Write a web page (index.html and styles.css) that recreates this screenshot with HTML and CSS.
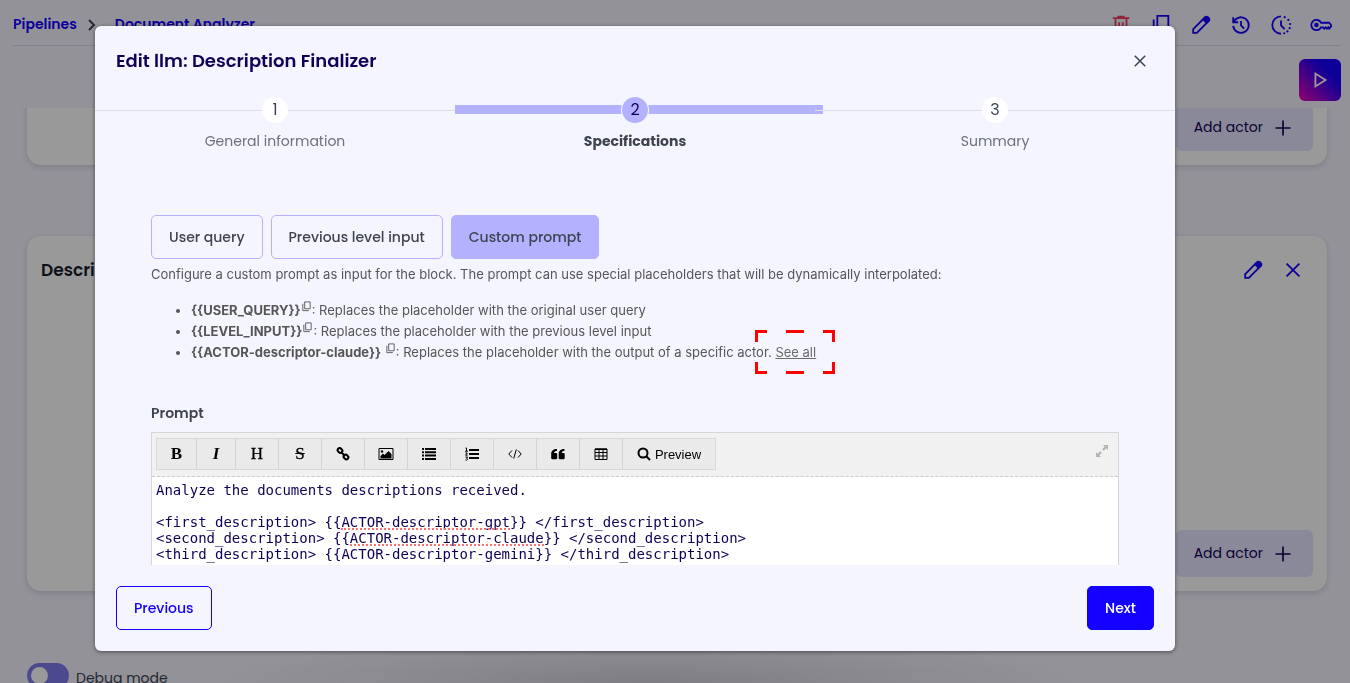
FILE: index.html
```
<!DOCTYPE html>
<html lang="en">
<head>
    <meta charset="UTF-8">
    <meta name="viewport" content="width=device-width, initial-scale=1.0">
    <title>Document Analyzer</title>
    <link rel="stylesheet" href="styles.css">
</head>
<body>
    <svg class="sprite" aria-hidden="true">
        <symbol id="copy" viewBox="0 0 24 24"><path d="M8 2h12v15H8zM4 6v15h13" /></symbol>
        <symbol id="edit" viewBox="0 0 24 24"><path d="M3.500 20.500v-4L16.500 3.500a1.500 1.500 0 0 1 2.200 0l1.800 1.800a1.500 1.500 0 0 1 0 2.200L7.500 20.500z" /><path class="solid" d="M14.500 6l2.500-2.500h2.500l1.500 1.500v2L18 9.500z" /></symbol>
        <symbol id="plus" viewBox="0 0 24 24"><path d="M12 3v18M3 12h18" /></symbol>
        <symbol id="close" viewBox="0 0 24 24"><path d="M5 5l14 14M19 5L5 19" /></symbol>
    </svg>

    <div class="page">
        <header class="topbar">
            <nav class="breadcrumb">
                <a href="#">Pipelines</a>
                <svg class="chevron" viewBox="0 0 10 14"><path d="M2 2l5 5-5 5" /></svg>
                <a href="#">Document Analyzer</a>
            </nav>
            <div class="actions">
                <button class="icon-button danger" aria-label="Delete"><svg class="icon" viewBox="0 0 24 24"><path d="M3 4.500h18M9 4.500V3h6v1.500M6 5v15h12V5M10 9v8M14 9v8" /></svg></button>
                <button class="icon-button" aria-label="Duplicate"><svg class="icon"><use href="#copy" /></svg></button>
                <button class="icon-button" aria-label="Edit"><svg class="icon"><use href="#edit" /></svg></button>
                <button class="icon-button" aria-label="History"><svg class="icon" viewBox="0 0 24 24"><path d="M3.500 13a8.500 8.500 0 1 0 2.500-7L3.500 8.500M3.500 3.500V9H9M12 7.500v5l3.500 3.500" /></svg></button>
                <button class="icon-button" aria-label="Schedule"><svg class="icon" viewBox="0 0 24 24"><path d="M12 2.500a9.500 9.500 0 0 0 0 19M12 7v5.500l4 4" /><path class="dots" d="M16 3.500h.01M20 6.500h.01M22 11h.01M21.500 15.500h.01M19 19h.01M15.500 21h.01" /></svg></button>
                <button class="icon-button" aria-label="API keys"><svg class="icon" viewBox="0 0 24 24"><path d="M12 9.500a5.600 5.600 0 1 0 0 5h2l1.500 1.500 1.500-1.500 1.500 1.500 1.500-1.500L21 16l2-2.500V12l-2.200-2.500z" /><circle class="solid" cx="7" cy="12" r="1.500" /></svg></button>
            </div>
        </header>
        <div class="runbar">
            <button class="run" aria-label="Run"><svg class="icon" viewBox="0 0 24 24"><path d="M7 5v14l11-7z" /></svg></button>
        </div>

        <main class="levels">
            <section class="level">
                <button class="add-actor">Add actor <svg class="icon"><use href="#plus" /></svg></button>
            </section>
            <section class="level">
                <div class="level-head">
                    <h2>Description Finalizer</h2>
                    <div class="level-actions">
                        <button class="icon-button" aria-label="Edit level"><svg class="icon"><use href="#edit" /></svg></button>
                        <button class="icon-button" aria-label="Remove level"><svg class="icon"><use href="#close" /></svg></button>
                    </div>
                </div>
                <button class="add-actor">Add actor <svg class="icon"><use href="#plus" /></svg></button>
            </section>
        </main>

        <footer class="page-footer">
            <input type="checkbox" class="switch" id="debug">
            <label for="debug">Debug mode</label>
        </footer>
    </div>

    <div class="overlay">
        <div class="modal" role="dialog" aria-labelledby="modal-title">
            <div class="modal-head">
                <h1 id="modal-title">Edit llm: Description Finalizer</h1>
                <button class="close" aria-label="Close"><svg class="icon"><use href="#close" /></svg></button>
            </div>

            <ol class="steps">
                <li class="step"><span class="step-number">1</span><span>General information</span></li>
                <li class="step active"><span class="step-number">2</span><span>Specifications</span></li>
                <li class="step"><span class="step-number">3</span><span>Summary</span></li>
            </ol>

            <div class="modal-body">
                <div class="tabs">
                    <button class="tab">User query</button>
                    <button class="tab">Previous level input</button>
                    <button class="tab selected">Custom prompt</button>
                </div>
                <p class="help">Configure a custom prompt as input for the block. The prompt can use special placeholders that will be dynamically interpolated:</p>
                <ul class="placeholders">
                    <li><b>{{USER_QUERY}}</b><button class="copy" aria-label="Copy"><svg class="icon"><use href="#copy" /></svg></button>: Replaces the placeholder with the original user query</li>
                    <li><b>{{LEVEL_INPUT}}</b><button class="copy" aria-label="Copy"><svg class="icon"><use href="#copy" /></svg></button>: Replaces the placeholder with the previous level input</li>
                    <li><b>{{ACTOR-descriptor-claude}}</b> <button class="copy" aria-label="Copy"><svg class="icon"><use href="#copy" /></svg></button>: Replaces the placeholder with the output of a specific actor.
                        <span class="marked"><a href="#">See all</a><svg class="marker" viewBox="0 0 80 44"><path d="M12 1.500H1.500V12M68 1.500h10.500V12M12 42.500H1.500V32M68 42.500h10.500V32M31 1.500h18M31 42.500h18" /></svg></span></li>
                </ul>

                <label class="prompt-label" for="prompt">Prompt</label>
                <div class="editor">
                    <div class="toolbar">
                        <div class="tools">
                            <button class="tool narrow serif"><b>B</b></button>
                            <button class="tool narrow serif"><b><i>I</i></b></button>
                            <button class="tool serif heading">H</button>
                            <button class="tool serif heading"><s>S</s></button>
                            <button class="tool" aria-label="Link"><svg viewBox="0 0 14 14"><g class="line"><rect x="1.500" y="1.500" width="5" height="4" rx="2" transform="rotate(45 4 3.500)" /><rect x="7.500" y="8" width="5" height="4" rx="2" transform="rotate(45 10 10)" /><path d="M5 5l4 4" /></g></svg></button>
                            <button class="tool" aria-label="Image"><svg class="broad" viewBox="0 0 16 14"><path class="thin" d="M1 1.500h14v11H1z" /><circle cx="4" cy="4.500" r="1.300" /><path d="M2.500 11.500V9L5 6.500 6.500 8l4-4 3 3v4.500z" /></svg></button>
                            <button class="tool" aria-label="Bulleted list"><svg viewBox="0 0 14 14"><path d="M0 1h2v2H0zM0 4.300h2v2H0zM0 7.600h2v2H0zM0 11h2v2H0zM3 1h11v2H3zM3 4.300h11v2H3zM3 7.600h11v2H3zM3 11h11v2H3z" /></svg></button>
                            <button class="tool" aria-label="Numbered list"><svg viewBox="0 0 14 14"><path d="M4 2h10v2H4zM4 6h10v2H4zM4 10h10v2H4z" /><path class="thin" d="M.5 1h1v3M0 4.200h3M.5 6h1.800L.6 8.200h2M.5 10h2L1.500 11.300c2 .2 1.200 2.200-1 1.700" /></svg></button>
                            <button class="tool" aria-label="Code"><svg viewBox="0 0 14 14"><path class="stroke" d="M4 3.500L.8 7 4 10.500M10 3.500L13.200 7 10 10.500M8.300 2.500l-2.600 9" /></svg></button>
                            <button class="tool" aria-label="Quote"><svg viewBox="0 0 14 14"><path d="M6 2v1.800C4.200 3.900 3.200 4.800 3.200 6H5a1.200 1.200 0 0 1 1.200 1.200V11A1.200 1.200 0 0 1 5 12.200H1.400A1.200 1.200 0 0 1 .2 11V6.500C.2 3.800 2.500 2 6 2zM13.500 2v1.800c-1.800.1-2.800 1-2.800 2.200h1.800a1.200 1.200 0 0 1 1.200 1.200V11a1.200 1.200 0 0 1-1.200 1.200H8.900A1.200 1.200 0 0 1 7.700 11V6.500C7.700 3.800 10 2 13.500 2z" /></svg></button>
                            <button class="tool" aria-label="Table"><svg viewBox="0 0 14 14"><path class="thin" d="M1 2h12v10.500H1zM1 5.500h12M1 9h12M5 2v10.500M9 2v10.500" /><path d="M1 1.500h12v1.500H1z" /></svg></button>
                            <button class="tool preview"><svg viewBox="0 0 14 14"><circle class="line" cx="6" cy="6" r="4.500" /><path class="line" d="M9.500 9.500L13 13" /></svg>Preview</button>
                        </div>
                        <button class="expand" aria-label="Full screen"><svg viewBox="0 0 14 14"><path d="M8 1h5v5l-1.700-1.700-2.500 2.500-1.600-1.600 2.500-2.500zM6 13H1V8l1.700 1.700 2.500-2.500 1.600 1.600-2.500 2.500z" /></svg></button>
                    </div>
                    <div class="text-area">
                        <textarea id="prompt" rows="10" spellcheck="false">Analyze the documents descriptions received.

&lt;first_description&gt; {{ACTOR-descriptor-gpt}} &lt;/first_description&gt;
&lt;second_description&gt; {{ACTOR-descriptor-claude}} &lt;/second_description&gt;
&lt;third_description&gt; {{ACTOR-descriptor-gemini}} &lt;/third_description&gt;</textarea>
                        <span class="squiggle squiggle-gpt"></span>
                        <span class="squiggle squiggle-claude"></span>
                    </div>
                </div>
            </div>

            <div class="modal-footer">
                <button class="button outline">Previous</button>
                <button class="button primary">Next</button>
            </div>
        </div>
    </div>
</body>
</html>
```
FILE: styles.css
```
* {
    box-sizing: border-box;
}
body {
    margin: 0;
    font-family: Poppins, Inter, sans-serif;
    font-size: 14px;
    color: #3d4451;
    background-color: #f5f4ff;
}
button {
    margin: 0;
    padding: 0;
    border: 0;
    background: none;
    font: inherit;
    color: inherit;
    cursor: pointer;
}
h1, h2, p, ul, ol {
    margin: 0;
    padding: 0;
}
.sprite {
    display: none;
}
.icon {
    width: 24px;
    height: 24px;
    fill: none;
    stroke: currentColor;
    stroke-width: 2;
}
.solid {
    fill: currentColor;
}
.dots {
    stroke-width: 2.400;
    stroke-linecap: round;
}

/* Page behind the dialog */
.page {
    display: flex;
    flex-direction: column;
    height: 100vh;
    overflow: hidden;
}
.topbar {
    display: flex;
    justify-content: space-between;
    align-items: center;
    height: 46px;
    margin: 0 9px 0 13px;
    padding-top: 4px;
    border-bottom: 1px solid #d9d8e4;
}
.breadcrumb {
    display: flex;
    align-items: center;
    gap: 10px;
    font-weight: 600;
}
.breadcrumb a {
    color: #1400ff;
    text-decoration: none;
}
.chevron {
    width: 10px;
    height: 14px;
    margin-right: 8px;
    fill: none;
    stroke: #3d4451;
    stroke-width: 2;
}
.actions, .level-actions {
    display: flex;
}
.icon-button {
    display: flex;
    align-items: center;
    justify-content: center;
    width: 40px;
    height: 40px;
    color: #1400ff;
}
.icon-button .icon {
    width: 22px;
    height: 22px;
}
.danger {
    color: #ef4060;
}
.runbar {
    display: flex;
    justify-content: flex-end;
    height: 62px;
    padding: 13px 9px 0;
}
.run {
    display: flex;
    align-items: center;
    justify-content: center;
    width: 42px;
    height: 42px;
    border-radius: 6px;
    color: #fff;
    background: linear-gradient(45deg, #f000b4, #1400ff 70%);
}
.run .icon {
    width: 22px;
    height: 22px;
}
.levels {
    flex: 1;
    display: flex;
    flex-direction: column;
    justify-content: flex-end;
    gap: 71px;
    min-height: 0;
    padding: 0 23px 10px 27px;
    overflow: hidden;
}
.level {
    flex: none;
    display: flex;
    flex-direction: column;
    justify-content: space-between;
    height: 355px;
    padding: 14px;
    border-radius: 14px;
    background-color: #fff;
    box-shadow: 0 2px 6px #d2d0de;
}
.level:first-child {
    justify-content: flex-end;
}
.level-head {
    display: flex;
    justify-content: space-between;
    align-items: center;
}
.level-head h2 {
    font-size: 17px;
    font-weight: 600;
    color: #1a1c2e;
}
.add-actor {
    display: flex;
    align-items: center;
    align-self: flex-end;
    gap: 10px;
    height: 47px;
    padding: 0 20px 0 18px;
    border-radius: 6px;
    color: #120056;
    background-color: #e6e4ff;
}
.add-actor .icon {
    width: 20px;
    height: 20px;
}
.page-footer {
    display: flex;
    align-items: flex-start;
    gap: 7px;
    height: 82px;
    padding: 62px 27px 0;
    line-height: 30px;
}
.switch {
    appearance: none;
    display: flex;
    width: 42px;
    height: 25px;
    margin: 0;
    padding: 4px;
    border-radius: 13px;
    background-color: #807bee;
}
.switch::before {
    content: "";
    width: 17px;
    height: 17px;
    border-radius: 50%;
    background-color: #fff;
}

/* Dialog */
.overlay {
    position: fixed;
    inset: 0;
    padding: 26px 0 32px 95px;
    background: radial-gradient(ellipse 440px 48px at 48% 100%, rgba(0, 0, 0, 0.14), transparent), rgba(0, 0, 0, 0.4);
}
.modal {
    display: flex;
    flex-direction: column;
    width: 80vw;
    height: 100%;
    border-radius: 6px;
    overflow: hidden;
    background-color: #f5f5ff;
    box-shadow: 0 1px 4px rgba(0, 0, 0, 0.5);
}
.modal-head {
    display: flex;
    justify-content: space-between;
    align-items: center;
    height: 71px;
    padding: 0 26px 2px 21px;
}
.modal-head h1 {
    font-size: 18px;
    font-weight: 600;
    color: #120056;
}
.close .icon {
    display: block;
    width: 18px;
    height: 18px;
}
.steps {
    display: grid;
    grid-template-columns: repeat(3, 1fr);
    list-style: none;
}
.step {
    position: relative;
    display: flex;
    flex-direction: column;
    align-items: center;
    gap: 8px;
    line-height: 20px;
    color: #6a7080;
}
.step::before {
    content: "";
    position: absolute;
    top: 13px;
    left: 0;
    width: 100%;
    height: 1px;
    background-color: #deddea;
}
.step-number {
    z-index: 1;
    width: 26px;
    height: 26px;
    border-radius: 50%;
    font-size: 16px;
    line-height: 26px;
    text-align: center;
    color: #3d4451;
    background-color: #fff;
}
.active {
    font-weight: 700;
    color: #3d4451;
}
.active::before {
    top: 8px;
    width: calc(100% + 8px);
    height: 9px;
    background-color: #b4b1ff;
}
.active .step-number {
    font-weight: 400;
    color: #120056;
    background-color: #b4b1ff;
    box-shadow: 0 0 0 1px #f5f5ff;
}
.modal-body {
    flex: 1;
    min-height: 0;
    padding: 64px 56px 0;
    overflow: hidden;
}
.tabs {
    display: flex;
    gap: 8px;
}
.tab, .button {
    height: 44px;
    padding: 0 17px;
    border: 1px solid #b4b1ff;
    border-radius: 5px;
    font-weight: 500;
}
.selected {
    background-color: #b4b1ff;
}
.help, .placeholders {
    font-family: Inter, sans-serif;
    font-size: 13px;
    line-height: 21px;
    color: #565656;
}
.help {
    margin-top: 5px;
}
.placeholders {
    margin-top: 15px;
    padding-left: 40px;
}
.copy {
    vertical-align: 3px;
    line-height: 10px;
}
.copy .icon {
    display: block;
    width: 11px;
    height: 11px;
}
.marked {
    position: relative;
}
.marked a {
    color: #6a6a6a;
}
.marker {
    position: absolute;
    top: -14px;
    left: -20px;
    width: 80px;
    height: 44px;
    fill: none;
    stroke: #f00;
    stroke-width: 3;
    pointer-events: none;
}
.prompt-label {
    display: block;
    margin: 40px 0 9px;
    font-weight: 600;
    line-height: 20px;
}

/* Prompt editor */
.editor {
    border: 1px solid #d5d5da;
}
.toolbar {
    display: flex;
    justify-content: space-between;
    height: 44px;
    padding: 5px 9px 0 4px;
    border-bottom: 1px dashed #ccc;
    background-color: #f1f1f1;
}
.tools {
    display: flex;
    height: 32px;
    border: 1px solid #d8d8d8;
}
.tool {
    display: flex;
    align-items: center;
    justify-content: center;
    gap: 4px;
    width: 43px;
    font-family: "Liberation Sans", Arial, sans-serif;
    font-size: 13px;
    color: #000;
    background-color: #eaeaea;
}
.tool + .tool {
    border-left: 1px solid #d5d5d5;
}
.narrow {
    width: 39px;
}
.preview {
    width: 93px;
}
.serif {
    font-family: "Liberation Serif", "Times New Roman", serif;
    font-size: 17px;
}
.heading {
    -webkit-text-stroke: 0.300px #000;
}
.tool svg {
    width: 14px;
    height: 14px;
}
.tool .broad {
    width: 16px;
}
.line, .stroke, .thin {
    fill: none;
    stroke: #000;
    stroke-width: 2;
}
.stroke, .thin {
    stroke-width: 1;
}
.expand {
    align-self: flex-start;
    margin-top: 6px;
}
.expand svg {
    display: block;
    width: 14px;
    height: 14px;
    fill: #b5b5b5;
}
.text-area {
    position: relative;
    font-family: "DejaVu Sans Mono", monospace;
    line-height: 16px;
}
textarea {
    display: block;
    width: 100%;
    padding: 5px 4px;
    border: 0;
    outline: 0;
    resize: none;
    font: inherit;
    color: #120056;
    background-color: #fff;
}
/* spelling marks, placed by line and character */
.squiggle {
    position: absolute;
    margin-left: 4px;
    border-bottom: 2px dotted #ff7070;
}
.squiggle-gpt {
    top: 51px;
    left: 22ch;
    width: 20ch;
}
.squiggle-claude {
    top: 67px;
    left: 23ch;
    width: 23ch;
}
.modal-footer {
    display: flex;
    justify-content: space-between;
    padding: 21px;
}
.outline {
    border-color: #1400ff;
    color: #1400ff;
}
.primary {
    border-color: #1400ff;
    color: #fff;
    background-color: #1400ff;
}
```
